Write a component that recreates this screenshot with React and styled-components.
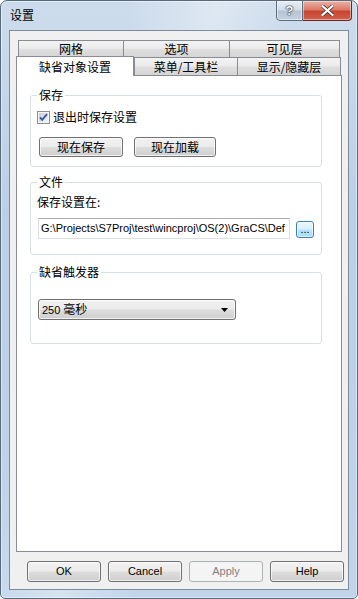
import React from "react";
import styled, { createGlobalStyle } from "styled-components";

const CJK = `"Noto Sans CJK SC", "Liberation Sans", sans-serif`;
const LATIN = `"Liberation Sans", "Noto Sans CJK SC", sans-serif`;

const GlobalStyle = createGlobalStyle`
  html, body {
    margin: 0;
    padding: 0;
    background: #fff;
  }
  body {
    font-family: ${CJK};
  }
`;

const Window = styled.div`
  width: 358px;
  height: 599px;
  box-sizing: border-box;
  border: 1px solid #596a7c;
  border-radius: 7px 7px 5px 5px;
  background:
    linear-gradient(105deg, rgba(255,255,255,0) 25%, rgba(255,255,255,0.35) 42%, rgba(255,255,255,0) 58%),
    linear-gradient(180deg, #cddcec 0%, #bad0e7 35%, #c0d4ea 100%);
  box-shadow: inset 0 0 0 1px rgba(255, 255, 255, 0.45);
  display: flex;
  flex-direction: column;
  overflow: hidden;
`;

const TitleBar = styled.div`
  flex: none;
  height: 29px;
  display: flex;
  justify-content: space-between;
  align-items: flex-start;
  padding: 0 5px 0 9px;
`;

const Title = styled.span`
  margin-top: 6px;
  font: 12px/16px ${CJK};
  color: #000;
`;

const Caption = styled.div`
  display: flex;
  margin-top: -1px;
`;

const CaptionButton = styled.div`
  width: ${(p) => p.$w}px;
  height: 21px;
  box-sizing: border-box;
  border: 1px solid ${(p) => (p.$close ? "#6b2a20" : "#5d6e80")};
  border-left: ${(p) => (p.$close ? "none" : undefined)};
  border-radius: ${(p) => (p.$close ? "0 0 4px 0" : "0 0 0 4px")};
  background: ${(p) =>
    p.$close
      ? "linear-gradient(#eab1a6, #dc7b6a 45%, #c8452f 55%, #d0604a)"
      : "linear-gradient(#e8eef5, #d3dde8 45%, #b5c4d4 55%, #c6d3e0)"};
  box-shadow: inset 0 0 0 1px rgba(255, 255, 255, 0.45);
  display: flex;
  align-items: center;
  justify-content: center;
  color: #fff;
  font: bold 13px/1 ${LATIN};
  text-shadow: 0 0 1px #2b3440, 0 0 1px #2b3440, 0 0 2px #2b3440;
`;

const Client = styled.div`
  flex: none;
  height: 560px;
  margin: 0 8px;
  box-sizing: border-box;
  border: 1px solid #7d8c9c;
  background: #f0f0f0;
  padding: 9px 0 0 6px;
  display: flex;
  flex-direction: column;
`;

const TabRow = styled.div`
  display: flex;
  height: ${(p) => p.$h}px;
  padding-left: 2px;
`;

const Tab = styled.div`
  flex: none;
  width: ${(p) => p.$w}px;
  margin-right: -1px;
  box-sizing: border-box;
  border: 1px solid #898c95;
  border-bottom: none;
  background: linear-gradient(#f3f3f3, #ebebeb 45%, #dedede 55%, #d5d5d5);
  display: flex;
  align-items: center;
  justify-content: center;
  font: 12px/14px ${CJK};
  color: #000;
`;

const ActiveTab = styled(Tab)`
  align-self: flex-start;
  height: 20px;
  margin: -1px 0 0 -2px;
  background: #fff;
  z-index: 1;
`;

const Panel = styled.div`
  width: 326px;
  height: 477px;
  box-sizing: border-box;
  border: 1px solid #898c95;
  background: #fff;
  padding: 11px 0 0 13px;
`;

const Group = styled.fieldset`
  width: 292px;
  min-inline-size: 0;
  box-sizing: border-box;
  margin: ${(p) => p.$mt || 0}px 0 0 0;
  padding: 0 6px ${(p) => p.$pb}px;
  border: 1px solid #d5dfe5;
  border-radius: 3px;
`;

const Legend = styled.legend`
  padding: 0 2px;
  font: 12px/16px ${CJK};
  color: #000;
`;

const CheckRow = styled.label`
  display: flex;
  align-items: center;
  gap: 3px;
  height: 14px;
  margin-top: 7px;
  font: 12px/14px ${CJK};
  color: #000;
`;

const ButtonRow = styled.div`
  display: flex;
  gap: ${(p) => p.$gap}px;
  margin-top: ${(p) => p.$mt}px;
  padding-left: ${(p) => p.$pl}px;
`;

const Button = styled.div`
  flex: none;
  width: ${(p) => p.$w}px;
  height: ${(p) => p.$h || 21}px;
  box-sizing: border-box;
  border: 1px solid ${(p) => (p.$disabled ? "#adb2b5" : "#707070")};
  border-radius: 3px;
  background: ${(p) =>
    p.$disabled
      ? "#f4f4f4"
      : "linear-gradient(#f2f2f2, #ebebeb 48%, #dddddd 52%, #cfcfcf)"};
  box-shadow: inset 0 0 0 1px ${(p) => (p.$disabled ? "#f4f4f4" : "rgba(255,255,255,0.7)")};
  display: flex;
  align-items: center;
  justify-content: center;
  font: ${(p) => (p.$latin ? `11px/13px ${LATIN}` : `12px/14px ${CJK}`)};
  color: ${(p) => (p.$disabled ? "#838383" : "#000")};
`;

const FieldLabel = styled.div`
  margin-top: 4px;
  font: 12px/16px ${CJK};
  color: #000;
`;

const PathRow = styled.div`
  display: flex;
  gap: 6px;
  margin: 8px 0 0 1px;
  height: 21px;
`;

const PathInput = styled.div`
  width: 252px;
  height: 21px;
  box-sizing: border-box;
  border: 1px solid #dbdfe6;
  border-top-color: #abadb3;
  padding: 0 2px;
  display: flex;
  align-items: center;
  overflow: hidden;
  white-space: nowrap;
  font: 11px/13px ${LATIN};
  color: #000;
`;

const BrowseButton = styled.div`
  align-self: flex-end;
  width: 18px;
  height: 17px;
  margin-bottom: 1px;
  box-sizing: border-box;
  border: 1px solid #3c7fb1;
  border-radius: 3px;
  background: linear-gradient(#eaf6fd, #d9f0fc 48%, #bee6fd 52%, #a7d9f5);
  box-shadow: inset 0 0 0 1px rgba(255, 255, 255, 0.6);
  display: flex;
  align-items: flex-end;
  justify-content: center;
  padding-bottom: 2px;
  font: 11px/11px ${LATIN};
  color: #000;
`;

const Combo = styled.div`
  width: 198px;
  height: 21px;
  margin: 19px 0 0 1px;
  box-sizing: border-box;
  border: 1px solid #707070;
  border-radius: 3px;
  background: linear-gradient(#f2f2f2, #ebebeb 48%, #dddddd 52%, #cfcfcf);
  box-shadow: inset 0 0 0 1px rgba(255, 255, 255, 0.7);
  display: flex;
  align-items: center;
  justify-content: space-between;
  padding: 0 7px 0 3px;
  font: 12px/14px ${CJK};
  color: #000;
`;

const Num = styled.span`
  font: 11px/13px ${LATIN};
  margin-right: 3px;
`;

function CheckBox() {
  return (
    <svg width="13" height="13" viewBox="0 0 13 13">
      <defs>
        <linearGradient id="cb" x1="0" y1="0" x2="1" y2="1">
          <stop offset="0" stopColor="#c9d0d8" />
          <stop offset="1" stopColor="#f2f4f6" />
        </linearGradient>
      </defs>
      <rect x="0.5" y="0.5" width="12" height="12" fill="#f4f4f4" stroke="#8e8f8f" />
      <rect x="2" y="2" width="9" height="9" fill="url(#cb)" />
      <path d="M3 6.3 L5.2 8.8 L10 3.2" fill="none" stroke="#3b54a0" strokeWidth="1.9" />
    </svg>
  );
}

export default function App() {
  return (
    <>
      <GlobalStyle />
      <Window>
        <TitleBar>
          <Title>设置</Title>
          <Caption>
            <CaptionButton $w={27}>?</CaptionButton>
            <CaptionButton $w={49} $close>
              <svg width="13" height="11" viewBox="0 0 13 11">
                <path
                  d="M1.5 1 L11.5 10 M11.5 1 L1.5 10"
                  stroke="#3a2420"
                  strokeWidth="3.6"
                  strokeLinecap="square"
                />
                <path
                  d="M1.5 1 L11.5 10 M11.5 1 L1.5 10"
                  stroke="#fff"
                  strokeWidth="2.2"
                  strokeLinecap="square"
                />
              </svg>
            </CaptionButton>
          </Caption>
        </TitleBar>

        <Client>
          <TabRow $h={17}>
            <Tab $w={106}>网格</Tab>
            <Tab $w={107}>选项</Tab>
            <Tab $w={111}>可见层</Tab>
          </TabRow>
          <TabRow $h={18}>
            <ActiveTab $w={118}>缺省对象设置</ActiveTab>
            <Tab $w={104}>菜单/工具栏</Tab>
            <Tab $w={104}>显示/隐藏层</Tab>
          </TabRow>

          <Panel>
            <Group $pb={9}>
              <Legend>保存</Legend>
              <CheckRow>
                <CheckBox />
                退出时保存设置
              </CheckRow>
              <ButtonRow $gap={11} $mt={13} $pl={2}>
                <Button $w={84} $h={20}>现在保存</Button>
                <Button $w={82} $h={20}>现在加载</Button>
              </ButtonRow>
            </Group>

            <Group $mt={7} $pb={15}>
              <Legend>文件</Legend>
              <FieldLabel>保存设置在:</FieldLabel>
              <PathRow>
                <PathInput>G:\Projects\S7Proj\test\wincproj\OS(2)\GraCS\Def</PathInput>
                <BrowseButton>...</BrowseButton>
              </PathRow>
            </Group>

            <Group $mt={9} $pb={23}>
              <Legend>缺省触发器</Legend>
              <Combo>
                <span>
                  <Num>250</Num>毫秒
                </span>
                <svg width="7" height="4" viewBox="0 0 7 4">
                  <path d="M0 0 H7 L3.5 4 Z" fill="#000" />
                </svg>
              </Combo>
            </Group>
          </Panel>

          <ButtonRow $gap={7} $mt={9} $pl={11}>
            <Button $w={74} $latin>OK</Button>
            <Button $w={74} $latin>Cancel</Button>
            <Button $w={74} $latin $disabled>Apply</Button>
            <Button $w={74} $latin>Help</Button>
          </ButtonRow>
        </Client>
      </Window>
    </>
  );
}
